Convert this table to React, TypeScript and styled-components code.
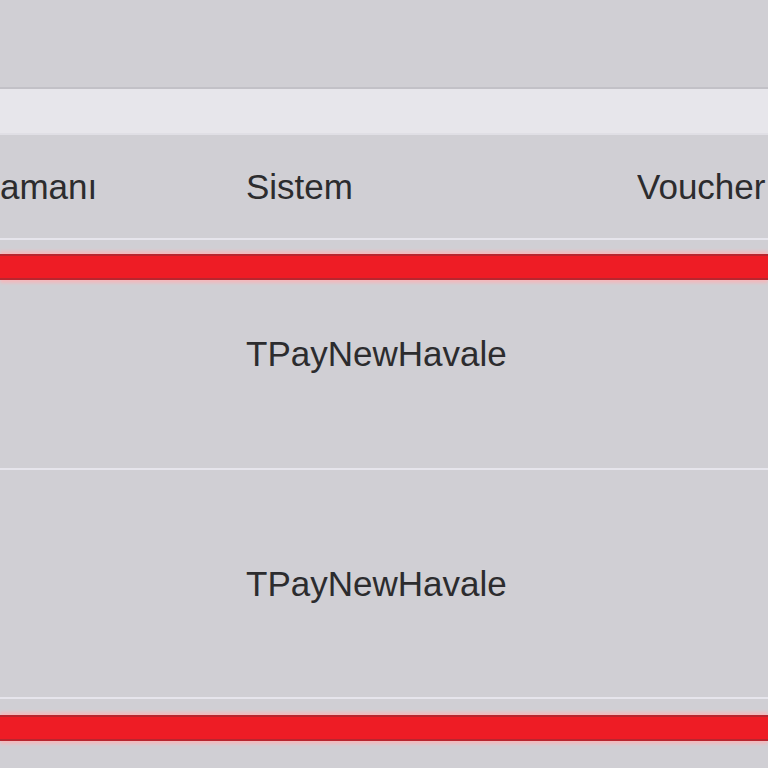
import * as React from "react";
import styled, { createGlobalStyle } from "styled-components";

const GlobalStyle = createGlobalStyle`
  html, body {
    margin: 0;
    padding: 0;
    background: #d0cfd4;
    overflow: hidden;
  }
`;

const Page = styled.div`
  width: 768px;
  height: 768px;
  overflow: hidden;
  background: #d0cfd4;
  font-family: "Liberation Sans", Arial, sans-serif;
  color: #2c2c2e;
`;

const TopArea = styled.div`
  height: 87px;
`;

const FilterBar = styled.div`
  height: 44px;
  background: #e7e6eb;
  border-top: 2px solid #c2c1c7;
  border-bottom: 2px solid #e0dfe5;
`;

const Row = styled.div<{ $height: number; $header?: boolean }>`
  position: relative;
  height: ${(p) => p.$height}px;
  display: grid;
  grid-template-columns: 246px 391px 1fr;
  align-items: center;
  font-size: 35px;
  white-space: nowrap;
  border-bottom: 2px solid #e6e5ec;
  overflow: hidden;
`;

const Cell = styled.div`
  overflow: hidden;
`;

const Alert = styled.div<{ $top: number }>`
  position: absolute;
  left: 0;
  right: 0;
  top: ${(p) => p.$top}px;
  height: 22px;
  background: #ee1c25;
  border-top: 2px solid #b8262f;
  border-bottom: 2px solid #b8262f;
  box-shadow: 0 -3px 3px #f3b9bd, 0 3px 3px #f3b9bd;
`;

const rows = [
  { height: 228, system: "TPayNewHavale", alert: 14 },
  { height: 227, system: "TPayNewHavale" },
  { height: 80, system: "", alert: 16 },
];

export default function App() {
  return (
    <Page>
      <GlobalStyle />
      <TopArea />
      <FilterBar />
      <Row $height={103} $header>
        <Cell>amanı</Cell>
        <Cell>Sistem</Cell>
        <Cell>Voucher</Cell>
      </Row>
      {rows.map((r, i) => (
        <Row key={i} $height={r.height}>
          {r.alert !== undefined && <Alert $top={r.alert} />}
          <Cell />
          <Cell>{r.system}</Cell>
          <Cell />
        </Row>
      ))}
    </Page>
  );
}
